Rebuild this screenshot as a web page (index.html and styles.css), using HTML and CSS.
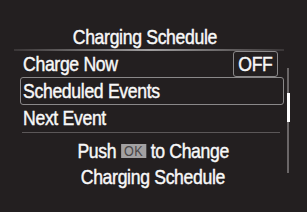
FILE: index.html
```html
<!DOCTYPE html>
<html lang="en">
<head>
  <meta charset="UTF-8">
  <title>Charging Schedule</title>
  <link rel="stylesheet" href="styles.css">
</head>
<body>
  <div class="screen">
    <div class="title"><span class="narrow">Charging Schedule</span></div>
    <div class="title-line"></div>

    <div class="menu">
      <div class="menu-row">
        <span class="narrow left">Charge Now</span>
        <span class="toggle"><span class="narrow">OFF</span></span>
      </div>
      <div class="menu-row selected">
        <span class="narrow left">Scheduled Events</span>
      </div>
      <div class="menu-row">
        <span class="narrow left">Next Event</span>
      </div>
    </div>
    <div class="menu-line"></div>

    <div class="message">
      <div><span class="narrow">Push <span class="key">OK</span> to Change</span></div>
      <div><span class="narrow">Charging Schedule</span></div>
    </div>

    <div class="scrollbar"><div class="thumb"></div></div>
  </div>
</body>
</html>
```

FILE: styles.css
```css
body {
  margin: 0;
  background-color: #231f20;
}

.screen {
  position: relative;
  width: 307px;
  height: 212px;
  box-sizing: border-box;
  padding: 26px 23px 0 14px;
  background-color: #231f20;
  color: #f8f8f8;
  font-family: "Liberation Sans", Arial, sans-serif;
  font-size: 21px;
  overflow: hidden;
}

/* the display font is condensed, squeeze the text */
.narrow {
  display: inline-block;
  transform: scaleX(0.84);
  transform-origin: center;
  letter-spacing: -0.4px;
  -webkit-text-stroke: 0.45px #f8f8f8;
  white-space: nowrap;
}

.narrow.left {
  transform-origin: left center;
}

.title {
  height: 22px;
  line-height: 22px;
  text-align: center;
  padding-right: 9px;
}

.title-line {
  height: 2px;
  margin-top: 1px;
  background: linear-gradient(to right, #3a3637, #a09e9f 50%, #3a3637);
}

.menu {
  padding-left: 6px;
}

.menu-row {
  display: flex;
  align-items: center;
  justify-content: space-between;
  height: 26px;
  padding-left: 3px;
  box-sizing: border-box;
}

.menu-row.selected {
  height: 28px;
  border: 1.5px solid #8a8889;
  border-radius: 3px;
  padding-left: 1.5px;
}

.toggle {
  width: 45px;
  height: 26px;
  line-height: 24px;
  box-sizing: border-box;
  border: 1.5px solid #8a8889;
  border-radius: 3px;
  text-align: center;
  margin-right: 6px;
}

.menu-line {
  height: 1px;
  margin: 1px 4px 0 8px;
  background-color: #5b5758;
}

.message {
  text-align: center;
  line-height: 26px;
  margin-top: 5px;
  padding-left: 8px;
}

.key {
  display: inline-block;
  width: 30px;
  height: 14px;
  background-color: #a3a1a2;
  color: #4a4647;
  -webkit-text-stroke: 0;
  letter-spacing: 0.5px;
  font-size: 15px;
  line-height: 14px;
  text-align: center;
  vertical-align: 2px;
}

.scrollbar {
  position: absolute;
  left: 287px;
  top: 68px;
  width: 2px;
  height: 105px;
  background-color: #6a6667;
}

.thumb {
  position: absolute;
  left: -0.5px;
  top: 25px;
  width: 3px;
  height: 29px;
  background-color: #ffffff;
}
```
